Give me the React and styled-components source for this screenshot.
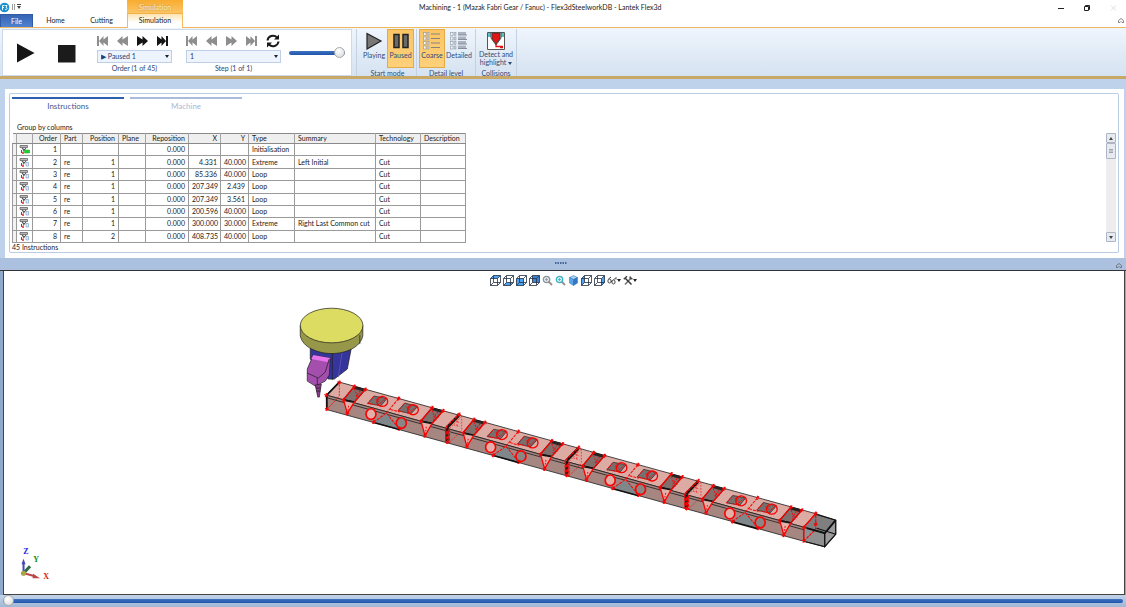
import { useState } from 'react';
import styled, { createGlobalStyle } from 'styled-components';

const GlobalStyle = createGlobalStyle`
  * { box-sizing: border-box; }
  body {
    margin: 0;
    background: #fff;
    color: #222;
    font-family: Lato, "Noto Sans", sans-serif;
    font-size: 7px;
    line-height: 10px;
  }
  button, select, input { font: inherit; color: inherit; margin: 0; }
  button { border: 0; padding: 0; background: none; cursor: pointer; }
`;

const Window = styled.div`
  display: flex;
  flex-direction: column;
  min-height: 100vh;
  background: #8ea9cb;
`;

/* ---------- title and tabs ---------- */

const Header = styled.header`
  display: grid;
  grid-template-columns: 127px 56px 1fr 1fr;
  grid-template-rows: 14px 13px;
  background: #fff;
  border-bottom: 1px solid #f0b75c;
`;

const QuickAccess = styled.div`
  display: flex;
  align-items: center;
  gap: 2px;
`;

const ContextTitle = styled.div`
  background: linear-gradient(#f8ac30, #fbc566);
  border-bottom: 1px solid #f0b146;
  color: #fff0cf;
  text-align: center;
  line-height: 15px;
  text-shadow: 0 0 2px #a87a30;
`;

const TitleRow = styled.div`
  grid-column: 3 / 5;
  display: flex;
  justify-content: space-between;
  padding-left: 236px;
`;

const Title = styled.h1`
  margin: 0;
  font-size: 7px;
  font-weight: 400;
  line-height: 14px;
  white-space: nowrap;
`;

const WindowButtons = styled.div`
  display: flex;
  align-items: center;
  gap: 19px;
  padding: 2px 9px 0 0;
  button { display: flex; }
`;

const Tabs = styled.nav`
  grid-column: 1 / 2;
  display: flex;
`;

const Tab = styled.button`
  width: ${p => p.$width || 46}px;
  line-height: 13px;
  text-align: center;
  ${p => p.$file && `
    color: #fff;
    background: linear-gradient(#3565b4, #4f83d0);
    border: 1px solid #2f5ca5;
    border-bottom: 0;
  `}
  ${p => p.$active && `
    width: 56px;
    margin-bottom: -1px;
    padding-bottom: 1px;
    background: linear-gradient(#fde3b0, #fff 60%);
    border: 1px solid #f3bb5c;
    border-width: 0 1px;
  `}
`;

const CollapseRow = styled.div`
  grid-column: 3 / 5;
  display: flex;
  justify-content: flex-end;
  align-items: center;
  padding: 0 2px 2px 0;
`;

/* ---------- ribbon ---------- */

const Ribbon = styled.section`
  display: flex;
  height: 51px;
  padding: 1px 2px 0;
  background: linear-gradient(#eff5fc, #d5e2f1);
  border-bottom: 3px solid #c8a866;
`;

const Player = styled.div`
  display: flex;
  align-items: center;
  width: 350px;
  padding: 0 6px 0 13px;
  background: #fff;
  border: 1px solid #ccd9ea;
`;

const BigButton = styled.button`
  display: flex;
  width: 20px;
  margin-right: 21px;
`;

const Transport = styled.div`
  display: flex;
  flex-direction: column;
  width: ${p => p.$width}px;
  margin-left: ${p => p.$gap}px;
`;

const TransportRow = styled.div`
  display: flex;
  align-items: center;
  height: 16px;
  gap: 9px;
  button { display: flex; }
`;

const SelectBox = styled.div`
  position: relative;
  margin-top: 1px;
  select {
    display: block;
    width: 100%;
    height: 13px;
    padding: 0 3px;
    appearance: none;
    background: #edf4fd;
    border: 1px solid #bdd0e8;
    border-radius: 0;
    color: #25416b;
  }
  svg {
    position: absolute;
    right: 3px;
    top: 5px;
    pointer-events: none;
  }
`;

const Caption = styled.label`
  text-align: center;
  color: #2b4470;
`;

const Range = styled.input`
  appearance: none;
  display: block;
  height: 12px;
  width: ${p => p.$width || '100%'};
  background: transparent;
  &::-webkit-slider-runnable-track {
    height: 4px;
    border-radius: 2px;
    background: linear-gradient(#3f74c0, #1f56ac);
  }
  &::-webkit-slider-thumb {
    appearance: none;
    width: 11px;
    height: 11px;
    margin-top: -4px;
    border: 1px solid #a9a9a9;
    border-radius: 50%;
    background: radial-gradient(circle at 40% 30%, #fff, #d6d6d6);
  }
`;

const Group = styled.div`
  display: flex;
  flex-direction: column;
  justify-content: space-between;
  padding: 0 2px;
  border-right: 1px solid #c3d1e3;
  color: #2f4a78;
  text-align: center;
  ${p => p.$first && `
    margin-left: 4px;
    padding-left: 4px;
    border-left: 1px solid #c3d1e3;
  `}
`;

const GroupButtons = styled.div`
  display: flex;
  justify-content: center;
`;

const RibbonButton = styled.button`
  display: flex;
  flex-direction: column;
  align-items: center;
  width: ${p => p.$width || 27}px;
  height: 39px;
  padding-top: 2px;
  border: 1px solid ${p => (p.$on ? '#e3ab45' : 'transparent')};
  background: ${p => (p.$on ? 'linear-gradient(#fbc566, #fdd07a)' : 'none')};
  line-height: ${p => (p.$tight ? 8 : 10)}px;
  white-space: nowrap;
`;

/* ---------- instructions panel ---------- */

const PanelArea = styled.section`
  padding: 10px 2px 0 5px;
  background: #bfd2eb;
`;

const Panel = styled.div`
  padding: 4px 5px 5px 4px;
  background: #fff;
`;

const PanelFrame = styled.div`
  padding: 3px 1px 0 2px;
  border: 1px solid #b9cce4;
  border-radius: 2px;
`;

const PageTabs = styled.div`
  display: flex;
  gap: 6px;
`;

const PageTab = styled.button`
  width: 112px;
  height: 16px;
  border-top: 2px solid ${p => (p.$active ? '#2d60ae' : '#a9bcdc')};
  color: ${p => (p.$active ? '#3f5b8e' : '#a9b9d6')};
  font-size: 8px;
  line-height: 14px;
`;

const GroupBy = styled.div`
  padding: 10px 0 2px 5px;
  line-height: 8px;
`;

const GridArea = styled.div`
  display: flex;
  justify-content: space-between;
  align-items: flex-start;
`;

const Grid = styled.table`
  table-layout: fixed;
  width: 453px;
  height: 110px;
  border-collapse: collapse;
  border-top: 1px solid #8a8a8a;
  th {
    height: 10px;
    padding: 0 3px;
    background: #efefef;
    border-right: 1px solid #a5a5a5;
    border-bottom: 1px solid #8a8a8a;
    font-weight: 400;
    line-height: 9px;
    text-align: left;
  }
  td {
    padding: 0 3px;
    border: 1px solid #9a9a9a;
    line-height: 9px;
    white-space: nowrap;
  }
  .num { text-align: right; }
  .handle { padding: 0; background: #f2f2f2; }
  .icon { padding: 0; }
  svg { display: block; margin: 0 auto; }
`;

const ScrollBar = styled.div`
  display: flex;
  flex-direction: column;
  justify-content: space-between;
  width: 10px;
  height: 109px;
  margin-right: 1px;
  background: #ededed;
`;

const ScrollPart = styled.button`
  display: flex;
  align-items: center;
  justify-content: center;
  width: 10px;
  height: ${p => p.$height || 10}px;
  border: 1px solid #adb6c2;
  border-radius: 1px;
  background: #e6ebf2;
`;

const Count = styled.div`
  line-height: 9px;
`;

const Splitter = styled.div`
  display: grid;
  grid-template-columns: 1fr auto 1fr;
  align-items: center;
  height: 13px;
  padding: 0 4px 0 0;
  background: #abc1df;
  border-bottom: 1px solid #333;
  button { justify-self: end; display: flex; padding-top: 2px; }
  & > svg { grid-column: 2; margin-bottom: 3px; }
`;

/* ---------- viewport ---------- */

const Viewport = styled.main`
  flex: 1;
  display: flex;
  flex-direction: column;
  margin: 0 1px 0 3px;
  border: 1px solid #444;
  border-width: 0 1px 1px;
  background: #fff;
`;

const ViewTools = styled.div`
  display: flex;
  justify-content: center;
  align-items: flex-start;
  gap: 2px;
  height: 18px;
  padding: 4px 2px 0 0;
  button { display: flex; align-items: center; }
`;

const Scene = styled.svg`
  display: block;
  width: 100%;
`;

const Timeline = styled.footer`
  padding: 0 3px;
  background: linear-gradient(#c3d4ea, #9fb7d6);
`;

/* ---------- icons ---------- */

const Caret = ({ fill = '#222' }) => (
  <svg width="4" height="3" viewBox="0 0 4 3"><path d="M0 0h4L2 3z" fill={fill} /></svg>
);

const Collapse = () => (
  <svg width="6" height="5" viewBox="0 0 6 5" fill="none" stroke="#666">
    <path d="M.5 2.500 3 .5l2.500 2v2h-1.500L3 3.500 2 4.500H.5z" strokeWidth=".8" />
  </svg>
);

const transportPaths = {
  first: 'M0 0h2v10H0zM6.500 0v3.500L11 0v10L6.500 6.500V10L2 5z',
  back: 'M0 5 5.500 0v3.500L11 0v10L5.500 6.500V10z',
  forward: 'M11 5 5.500 0v3.500L0 0v10l5.500-3.500V10z',
  last: 'M9 0h2v10H9zM4.500 0v3.500L0 0v10l4.500-3.500V10L9 5z',
};

const TransportButton = ({ kind, label, on }) => (
  <button aria-label={label}>
    <svg width="11" height="10" viewBox="0 0 11 10">
      <path d={transportPaths[kind]} fill={on ? '#151515' : '#8e8e8e'} />
    </svg>
  </button>
);

const Lines = ({ thick }) => (
  <svg width="18" height="18" viewBox="0 0 18 18">
    {[0.5, 5, 9.5, 14].map(y => (
      <g key={y}>
        <rect x=".5" y={y} width="2.500" height="3" fill="#f4f6f9" stroke="#8d97a5" strokeWidth=".6" />
        <rect x="4" y={y} width="2" height="3" fill="#c9d1dc" stroke="#8d97a5" strokeWidth=".5" />
        <rect x="8" y={thick ? y - 0.5 : y + 1} width={thick ? 8 : 9} height={thick ? 3 : 1} fill={thick ? '#aab3bf' : '#87837a'} />
        {thick && <path d={`M8 ${y + 2.5}h9`} stroke="#7d8794" strokeWidth=".9" />}
      </g>
    ))}
  </svg>
);

const Cube = ({ face }) => {
  const faces = {
    top: 'M.5 3.500 3.500.5h7l-3 3z',
    bottom: 'M.5 10.500l3-3h7l-3 3z',
    front: 'M.5 3.500h7v7h-7z',
    back: 'M3.500.5h7v7h-7z',
    left: 'M.5 3.500l3-3v7l-3 3z',
    right: 'M7.500 3.500l3-3v7l-3 3z',
  };
  return (
    <svg width="11" height="11" viewBox="0 0 11 11">
      <path d={faces[face]} fill={face === 'back' ? '#3d83d0' : '#4da3f2'} />
      <path d="M.5 3.500h7v7h-7zM3.500.5h7v7h-7zM.5 3.500l3-3M7.500 3.500l3-3M7.500 10.500l3-3M.5 10.500l3-3" fill="none" stroke="#243042" strokeWidth=".8" />
    </svg>
  );
};

const Lens = ({ tint }) => (
  <svg width="11" height="11" viewBox="0 0 11 11">
    <path d="M6.500 6.500 10 10" stroke="#9a8f88" strokeWidth="1.800" />
    <circle cx="4.500" cy="4.500" r="3.200" fill="#dfeaef" stroke={tint} strokeWidth="1.300" />
    <path d="M3 4.500h3M4.500 3v3" stroke={tint} strokeWidth=".8" />
  </svg>
);

const IsoCube = () => (
  <svg width="11" height="11" viewBox="0 0 11 11" stroke="#2c6aa8" strokeWidth=".5">
    <path d="M5.500.5 9.500 2.500 5.500 4.500 1.500 2.500z" fill="#a8d2f8" />
    <path d="M1.500 2.500l4 2v6l-4-2.500z" fill="#5ea4e4" />
    <path d="M9.500 2.500l-4 2v6l4-2.500z" fill="#2f78c4" />
  </svg>
);

const Glasses = () => (
  <svg width="10" height="11" viewBox="0 0 10 11" fill="none" stroke="#333" strokeWidth=".9">
    <ellipse cx="2.500" cy="6" rx="1.600" ry="2" />
    <ellipse cx="6.500" cy="7" rx="1.600" ry="2" />
    <path d="M1.500 4 4 2M6.500 5 9 2.500M9 2.500v2M4 6.300h1" />
  </svg>
);

const Tools = () => (
  <svg width="10" height="11" viewBox="0 0 10 11" fill="none">
    <path d="M2 9.500 8.500 2.500" stroke="#777" strokeWidth="1.600" />
    <path d="M2 3l6.500 6.500" stroke="#333" strokeWidth="1.400" />
    <path d="M.8 4.300 4 1.300M7 1.500l.5 2 2 .3" stroke="#444" strokeWidth="1.500" />
  </svg>
);

const RowIcon = ({ done }) => (
  <svg width="11" height="9" viewBox="0 0 11 9">
    <path d="M1 .5h7.500v2H1z" fill="#b9b9b9" stroke="#555" strokeWidth=".7" />
    <path d="M3 3 5.500 5.500M7 3 4 6.500M2.500 5v3" stroke="#555" strokeWidth="1.100" />
    <path d="M3 8h2" stroke="#e02020" strokeWidth="1.400" />
    {done
      ? <path d="M5.500 5h5v3h-5z" fill="#1fd62f" stroke="#149a20" strokeWidth=".5" />
      : <path d="M7 4.500h2.500v3.500H7z" fill="#e6eefa" stroke="#8fabd6" strokeWidth=".8" />}
  </svg>
);

/* ---------- model ---------- */

const Ticks = ({ points }) => points.map(([x, y]) => (
  <path key={`${x}-${y}`} d={`M${x - 6} ${y - 2}l12 4M${x} ${y - 6}v12M${x - 4} ${y + 5}l8-10`} stroke="#f80404" strokeWidth="3" />
));

// One repeat of the cut pattern, drawn at three units to the pixel.
const Segment = ({ index }) => (
  <g transform={`translate(${280 + index * 119.5} ${295 + index * 33.1}) scale(.3333)`} fill="none">
    <path d="M190 316 222 277 255 286 222 324z" fill="#806f6c" stroke="#111" strokeWidth="3" />
    <path d="M222 277 255 286 250 292 218 283z" fill="#2b2423" />
    <path d="M190 318 222 324 201 358z" fill="#e2b0a8" />
    <path d="M190 318 222 324" stroke="#111" strokeWidth="5" />
    <path d="M190 318 201 358 222 324M190 316 222 277M222 324 255 286" stroke="#f80404" strokeWidth="4" />
    <path d="M222 285l8 18 16 2M226 306l8 4M205 335l-4 23M240 290l-12 16" stroke="#f80404" strokeWidth="3" strokeDasharray="5 4" />
    <path d="M262 328 281 306 320 313 302 335z" fill="#76706f" stroke="#222" strokeWidth="2" />
    <path d="M262 328l40 7M262 328l19-22" stroke="#f80404" strokeWidth="3" strokeDasharray="4 3" />
    <ellipse cx="306" cy="322" rx="16" ry="15" stroke="#f80404" strokeWidth="4" />
    <path d="M288 324l18-18M296 332l20-20M286 314l14 12" stroke="#f80404" strokeWidth="2" />
    <path d="M353 350 373 327 412 337 392 359z" fill="#76706f" stroke="#222" strokeWidth="2" />
    <path d="M353 350l39 9M353 350l20-23" stroke="#f80404" strokeWidth="3" strokeDasharray="4 3" />
    <ellipse cx="398" cy="347" rx="16" ry="15" stroke="#f80404" strokeWidth="4" />
    <path d="M380 349l18-18M388 357l20-20M378 339l14 12" stroke="#f80404" strokeWidth="2" />
    <path d="M318 357 280 384 357 404z" fill="#80878a" />
    <path d="M280 385 357 406" stroke="#111" strokeWidth="5" />
    <path d="M280 384 318 357 357 404M318 357 355 313M330 346l28 8" stroke="#f80404" strokeWidth="3" strokeDasharray="9 3" />
    <ellipse cx="272" cy="360" rx="15" ry="16" fill="#e2b0a8" stroke="#f80404" strokeWidth="5" />
    <ellipse cx="363" cy="387" rx="15" ry="16" fill="#8a8684" stroke="#f80404" strokeWidth="5" />
    <path d="M422 380 455 341 488 350 455 388z" fill="#806f6c" stroke="#111" strokeWidth="3" />
    <path d="M455 341 488 350 483 356 451 347z" fill="#2b2423" />
    <path d="M422 382 455 388 434 425z" fill="#e2b0a8" />
    <path d="M422 382 455 388" stroke="#111" strokeWidth="5" />
    <path d="M422 382 434 425 455 388M422 380 455 341M455 388 488 350" stroke="#f80404" strokeWidth="4" />
    <path d="M456 350l6 18 16 4M458 376l10 2M438 398l-4 26M472 354l-12 16" stroke="#f80404" strokeWidth="3" strokeDasharray="5 4" />
    <Ticks points={[[190, 317], [222, 277], [255, 286], [201, 358], [280, 384], [357, 404], [355, 313], [422, 381], [455, 341], [488, 350], [434, 425]]} />
    {index < 3 && (
      <>
        <path d="M500 400 535 364M500 403v40" stroke="#111" strokeWidth="9" />
        <path d="M496 400 536 360M496 400v45M507 404v45" stroke="#f80404" strokeWidth="4" strokeDasharray="10 3" />
        <path d="M508 445l36-36v-44M524 378l16 10M520 392l18 6M530 372v26M508 402l34-34" stroke="#f80404" strokeWidth="2" strokeDasharray="5 4" />
        <Ticks points={[[536, 361], [501, 415], [501, 430], [501, 444]]} />
      </>
    )}
  </g>
);

const Model = () => (
  <Scene viewBox="4 290 1119 304" role="img" aria-label="Machine head above the beam">
    <g stroke="#1c1c1c" strokeWidth=".7">
      <path d="M310 349V360L328 380H334L347 370 351 349z" fill="#35359b" />
      <path d="M332 352V381" />
      <path d="M342 352 338 378" stroke="#5b5bc0" />
      <path d="M300 326.500v10c2 12 18 18 31.500 18s29-6 31-18v-10z" fill="#97974a" />
      <ellipse cx="331.300" cy="326.500" rx="31.300" ry="17.300" fill="#dddc62" />
      <path d="M359.500 336v9" />
      <path d="M313 356 330 359 329 376 325 382 315 387 307 382V370z" fill="#a44fae" />
      <path d="M313 356 330 359 327 363 311 360z" fill="#e873ef" stroke="none" />
      <path d="M307 374l11 5 7-6 4-13M317 379v8" fill="none" />
      <path d="M315 386 321 385 319 398H317.500z" fill="#8d3a92" />
      <path d="M315.500 389h5M316 392h4" />
    </g>

    <g stroke="#1c1c1c" strokeWidth=".8">
      <path d="M326 396 339 383 815 514.500 803 528z" fill="#dcaca4" />
      <path d="M326 396 803 528V542L326.500 410.500z" fill="#a58681" />
      <path d="M326 398.500 803 530.500" fill="none" />
      <path d="M815 514.500 835 521 824 534 803 528z" fill="#7f7f7f" />
      <path d="M803 528 824 534V547.500L803 542z" fill="#909090" />
      <path d="M824 534 835 521V535L824 547.500z" fill="#9a9a9a" />
    </g>
    {[0, 1, 2, 3].map(i => <Segment key={i} index={i} />)}

    <g fill="none">
      <path d="M326.500 411V396L339 383" stroke="#111" strokeWidth="1.800" />
      <path d="M327 410 339 397V383" stroke="#f80404" strokeWidth=".8" strokeDasharray="2 1" />
      <path d="M803 542V528L815 514.500" stroke="#f80404" strokeWidth="1.500" />
      <path d="M803 542 815 530V514.500" stroke="#f80404" strokeWidth="1.200" strokeDasharray="3 1" />
      <path d="M815 515 835 521V535L824 547.500V534L835 521M824 547.500 803 542M835 535 816 529" stroke="#111" strokeWidth="1.100" />
      <path d="M806 529 824 534 835 521" stroke="#111" strokeWidth="1.800" />
    </g>
    <g transform="translate(280 295) scale(.3333)">
      <Ticks points={[[177, 265], [138, 303], [140, 345], [1605, 658], [1605, 690], [1570, 700], [1570, 740]]} />
    </g>

    <g strokeWidth="2">
      <path d="M23.500 574 30 567" stroke="#2e6b3f" strokeWidth="3" />
      <path d="M23.500 573V563" stroke="#4449b4" />
      <path d="M21.500 565 23.500 559.500 25.500 565z" fill="#4449b4" />
      <path d="M24 574 35 577" stroke="#b94848" />
      <path d="M33 574.500 40 579 32.500 579z" fill="#b94848" />
      <circle cx="23.500" cy="574" r="2.600" fill="#a9a343" />
    </g>
    <g fontFamily="Liberation Serif, serif" fontWeight="700" fontSize="8" textAnchor="middle">
      <text x="26" y="555" fill="#2222e0">Z</text>
      <text x="36" y="563" fill="#179017">Y</text>
      <text x="46" y="580" fill="#e81212">X</text>
    </g>
  </Scene>
);

/* ---------- data ---------- */

const columns = [
  ['Order', 28, 'num'], ['Part', 22], ['Position', 36, 'num'], ['Plane', 27], ['Reposition', 43, 'num'],
  ['X', 32, 'num'], ['Y', 28, 'num'], ['Type', 46], ['Summary', 81], ['Technology', 45], ['Description', 45],
];

const rows = [
  ['1', '', '', '', '0.000', '', '', 'Initialisation', '', '', ''],
  ['2', 're', '1', '', '0.000', '4.331', '40.000', 'Extreme', 'Left Initial', 'Cut', ''],
  ['3', 're', '1', '', '0.000', '85.336', '40.000', 'Loop', '', 'Cut', ''],
  ['4', 're', '1', '', '0.000', '207.349', '2.439', 'Loop', '', 'Cut', ''],
  ['5', 're', '1', '', '0.000', '207.349', '3.561', 'Loop', '', 'Cut', ''],
  ['6', 're', '1', '', '0.000', '200.596', '40.000', 'Loop', '', 'Cut', ''],
  ['7', 're', '1', '', '0.000', '300.000', '30.000', 'Extreme', 'Right Last Common cut', 'Cut', ''],
  ['8', 're', '2', '', '0.000', '408.735', '40.000', 'Loop', '', 'Cut', ''],
];

const viewTools = [
  ['Top view', <Cube face="top" />], ['Bottom view', <Cube face="bottom" />],
  ['Front view', <Cube face="front" />], ['Back view', <Cube face="back" />],
  ['Zoom', <Lens tint="#8d9499" />], ['Zoom all', <Lens tint="#35b5c4" />],
  ['Isometric view', <IsoCube />], ['Left view', <Cube face="left" />], ['Right view', <Cube face="right" />],
];

const App = () => {
  const [speed, setSpeed] = useState(100);
  const [time, setTime] = useState(0);

  return (
    <>
      <GlobalStyle />
      <Window>
        <Header>
          <QuickAccess>
            <svg width="10" height="12" viewBox="0 0 10 12">
              <circle cx="4.500" cy="6.500" r="4.800" fill="#1b93d0" />
              <path d="M2.500 9V4.500h2M2.500 6.500h1.500M5.200 4.500H7L6 6.300c1.800.2 1.300 2.500-.8 2.200" fill="none" stroke="#fff" strokeWidth=".9" />
            </svg>
            <svg width="10" height="8" viewBox="0 0 10 8">
              <path d="M.5 1v6M2.500 1v6" stroke="#888" strokeWidth=".8" />
              <path d="M5 1.500h4" stroke="#444" />
              <path d="M5 3h4L7 6z" fill="#444" />
            </svg>
          </QuickAccess>
          <ContextTitle>Simulation</ContextTitle>
          <TitleRow>
            <Title>Machining - 1 (Mazak Fabri Gear / Fanuc) - Flex3dSteelworkDB - Lantek Flex3d</Title>
            <WindowButtons>
              <button aria-label="Minimise">
                <svg width="6" height="8" viewBox="0 0 6 8"><path d="M0 4.500h6" stroke="#222" /></svg>
              </button>
              <button aria-label="Restore">
                <svg width="8" height="8" viewBox="0 0 8 8" fill="none" stroke="#222">
                  <path d="M1.500 2.500h4v4h-4zM2.500 2.500v-1h4v4h-1" />
                </svg>
              </button>
              <button aria-label="Close">
                <svg width="7" height="8" viewBox="0 0 7 8"><path d="M1 1.500 6 6.500M6 1.500 1 6.500" stroke="#d5d5d5" strokeWidth=".8" /></svg>
              </button>
            </WindowButtons>
          </TitleRow>
          <Tabs>
            <Tab $file $width={33}>File</Tab>
            <Tab $width={45}>Home</Tab>
            <Tab $width={47}>Cutting</Tab>
          </Tabs>
          <Tab $active>Simulation</Tab>
          <CollapseRow>
            <button aria-label="Collapse ribbon"><Collapse /></button>
          </CollapseRow>
        </Header>

        <Ribbon>
          <Player>
            <BigButton aria-label="Play">
              <svg width="20" height="20" viewBox="0 0 20 20"><path d="M1 .5 18.500 10 1 19.500z" fill="#151515" /></svg>
            </BigButton>
            <BigButton aria-label="Stop">
              <svg width="20" height="20" viewBox="0 0 20 20"><path d="M1 2h17.500v17.500H1z" fill="#1b1b1b" /></svg>
            </BigButton>
            <Transport $width={75} $gap={-1}>
              <TransportRow>
                <TransportButton kind="first" label="First order" />
                <TransportButton kind="back" label="Previous order" />
                <TransportButton kind="forward" label="Next order" on />
                <TransportButton kind="last" label="Last order" on />
              </TransportRow>
              <SelectBox>
                <select id="order"><option>▶ Paused 1</option></select>
                <Caret />
              </SelectBox>
              <Caption htmlFor="order">Order (1 of 45)</Caption>
            </Transport>
            <Transport $width={95} $gap={14}>
              <TransportRow>
                <TransportButton kind="first" label="First step" />
                <TransportButton kind="back" label="Previous step" />
                <TransportButton kind="forward" label="Next step" />
                <TransportButton kind="last" label="Last step" />
                <button aria-label="Repeat">
                  <svg width="14" height="14" viewBox="0 0 14 14" fill="none" stroke="#1a1a1a" strokeWidth="2">
                    <path d="M1.500 6.500A5.500 5.300 0 0 1 11 3.500M12.500 7.500A5.500 5.300 0 0 1 3 10.500" />
                    <path d="M13 .5v5H8zM1 13.500v-5h5z" fill="#1a1a1a" stroke="none" />
                  </svg>
                </button>
              </TransportRow>
              <SelectBox>
                <select id="step"><option>1</option></select>
                <Caret />
              </SelectBox>
              <Caption htmlFor="step">Step (1 of 1)</Caption>
            </Transport>
            <Transport $width={56} $gap={8}>
              <Range type="range" aria-label="Speed" value={speed} onChange={e => setSpeed(e.target.value)} />
            </Transport>
          </Player>

          <Group $first>
            <GroupButtons>
              <RibbonButton $width={26}>
                <svg width="18" height="18" viewBox="0 0 18 18"><path d="M2 1.500 16 9 2 17z" fill="#777" stroke="#222" strokeWidth="1.200" /></svg>
                Playing
              </RibbonButton>
              <RibbonButton $on>
                <svg width="18" height="18" viewBox="0 0 18 18" fill="#6a6a6a" stroke="#222" strokeWidth="1.500">
                  <path d="M2 2.500h5v13H2zM11 2.500h5v13h-5z" />
                </svg>
                Paused
              </RibbonButton>
            </GroupButtons>
            Start mode
          </Group>
          <Group>
            <GroupButtons>
              <RibbonButton $on $width={26}><Lines />Coarse</RibbonButton>
              <RibbonButton $width={28}><Lines thick />Detailed</RibbonButton>
            </GroupButtons>
            Detail level
          </Group>
          <Group>
            <GroupButtons>
              <RibbonButton $width={36} $tight>
                <svg width="18" height="18" viewBox="0 0 18 18">
                  <path d="M.5.500h17v17H.5z" fill="#fff" stroke="#555" />
                  <path d="M1 1h3v4H1zM14 1h3v4h-3z" fill="#55bfc6" />
                  <path d="M5 1h8v6l-4 5-4-5z" fill="#e01616" stroke="#333" strokeWidth=".8" />
                  <path d="M4 1v5l5 7 5-7V1" fill="none" stroke="#444" strokeWidth=".9" />
                  <path d="M9 12v2.500h7M13 15.500h3" stroke="#e01616" strokeWidth="1.300" fill="none" />
                </svg>
                Detect and
                <span>highlight <Caret fill="#2f4a78" /></span>
              </RibbonButton>
            </GroupButtons>
            Collisions
          </Group>
        </Ribbon>

        <PanelArea>
          <Panel>
            <PanelFrame>
              <PageTabs>
                <PageTab $active>Instructions</PageTab>
                <PageTab>Machine</PageTab>
              </PageTabs>
              <GroupBy>Group by columns</GroupBy>
              <GridArea>
                <Grid>
                  <colgroup>
                    <col style={{ width: 4 }} />
                    <col style={{ width: 16 }} />
                    {columns.map(([name, width]) => <col key={name} style={{ width }} />)}
                  </colgroup>
                  <thead>
                    <tr>
                      <th className="handle" />
                      <th className="icon" />
                      {columns.map(([name, , kind]) => <th key={name} className={kind}>{name}</th>)}
                    </tr>
                  </thead>
                  <tbody>
                    {rows.map((row, r) => (
                      <tr key={row[0]}>
                        <td className="handle" />
                        <td className="icon"><RowIcon done={r === 0} /></td>
                        {row.map((value, i) => <td key={columns[i][0]} className={columns[i][2]}>{value}</td>)}
                      </tr>
                    ))}
                  </tbody>
                </Grid>
                <ScrollBar>
                  <div>
                    <ScrollPart aria-label="Scroll up">
                      <svg width="4" height="3" viewBox="0 0 4 3"><path d="M0 3h4L2 0z" fill="#444" /></svg>
                    </ScrollPart>
                    <ScrollPart $height={16} aria-label="Scroll position">
                      <svg width="4" height="4" viewBox="0 0 4 4"><path d="M0 .5h4M0 2h4M0 3.500h4" stroke="#8a929c" strokeWidth=".8" /></svg>
                    </ScrollPart>
                  </div>
                  <ScrollPart aria-label="Scroll down"><Caret fill="#444" /></ScrollPart>
                </ScrollBar>
              </GridArea>
              <Count>45 Instructions</Count>
            </PanelFrame>
          </Panel>
        </PanelArea>
        <Splitter>
          <svg width="12" height="8" viewBox="0 0 12 8"><path d="M0 4h12" stroke="#23477f" strokeWidth="1.500" strokeDasharray="1.500 1" /></svg>
          <button aria-label="Collapse panel"><Collapse /></button>
        </Splitter>

        <Viewport>
          <ViewTools>
            {viewTools.map(([name, icon]) => <button key={name} aria-label={name}>{icon}</button>)}
            <button aria-label="Visibility"><Glasses /><Caret /></button>
            <button aria-label="Options"><Tools /><Caret /></button>
          </ViewTools>
          <Model />
        </Viewport>
        <Timeline>
          <Range type="range" aria-label="Timeline" value={time} onChange={e => setTime(e.target.value)} />
        </Timeline>
      </Window>
    </>
  );
};

export default App;
